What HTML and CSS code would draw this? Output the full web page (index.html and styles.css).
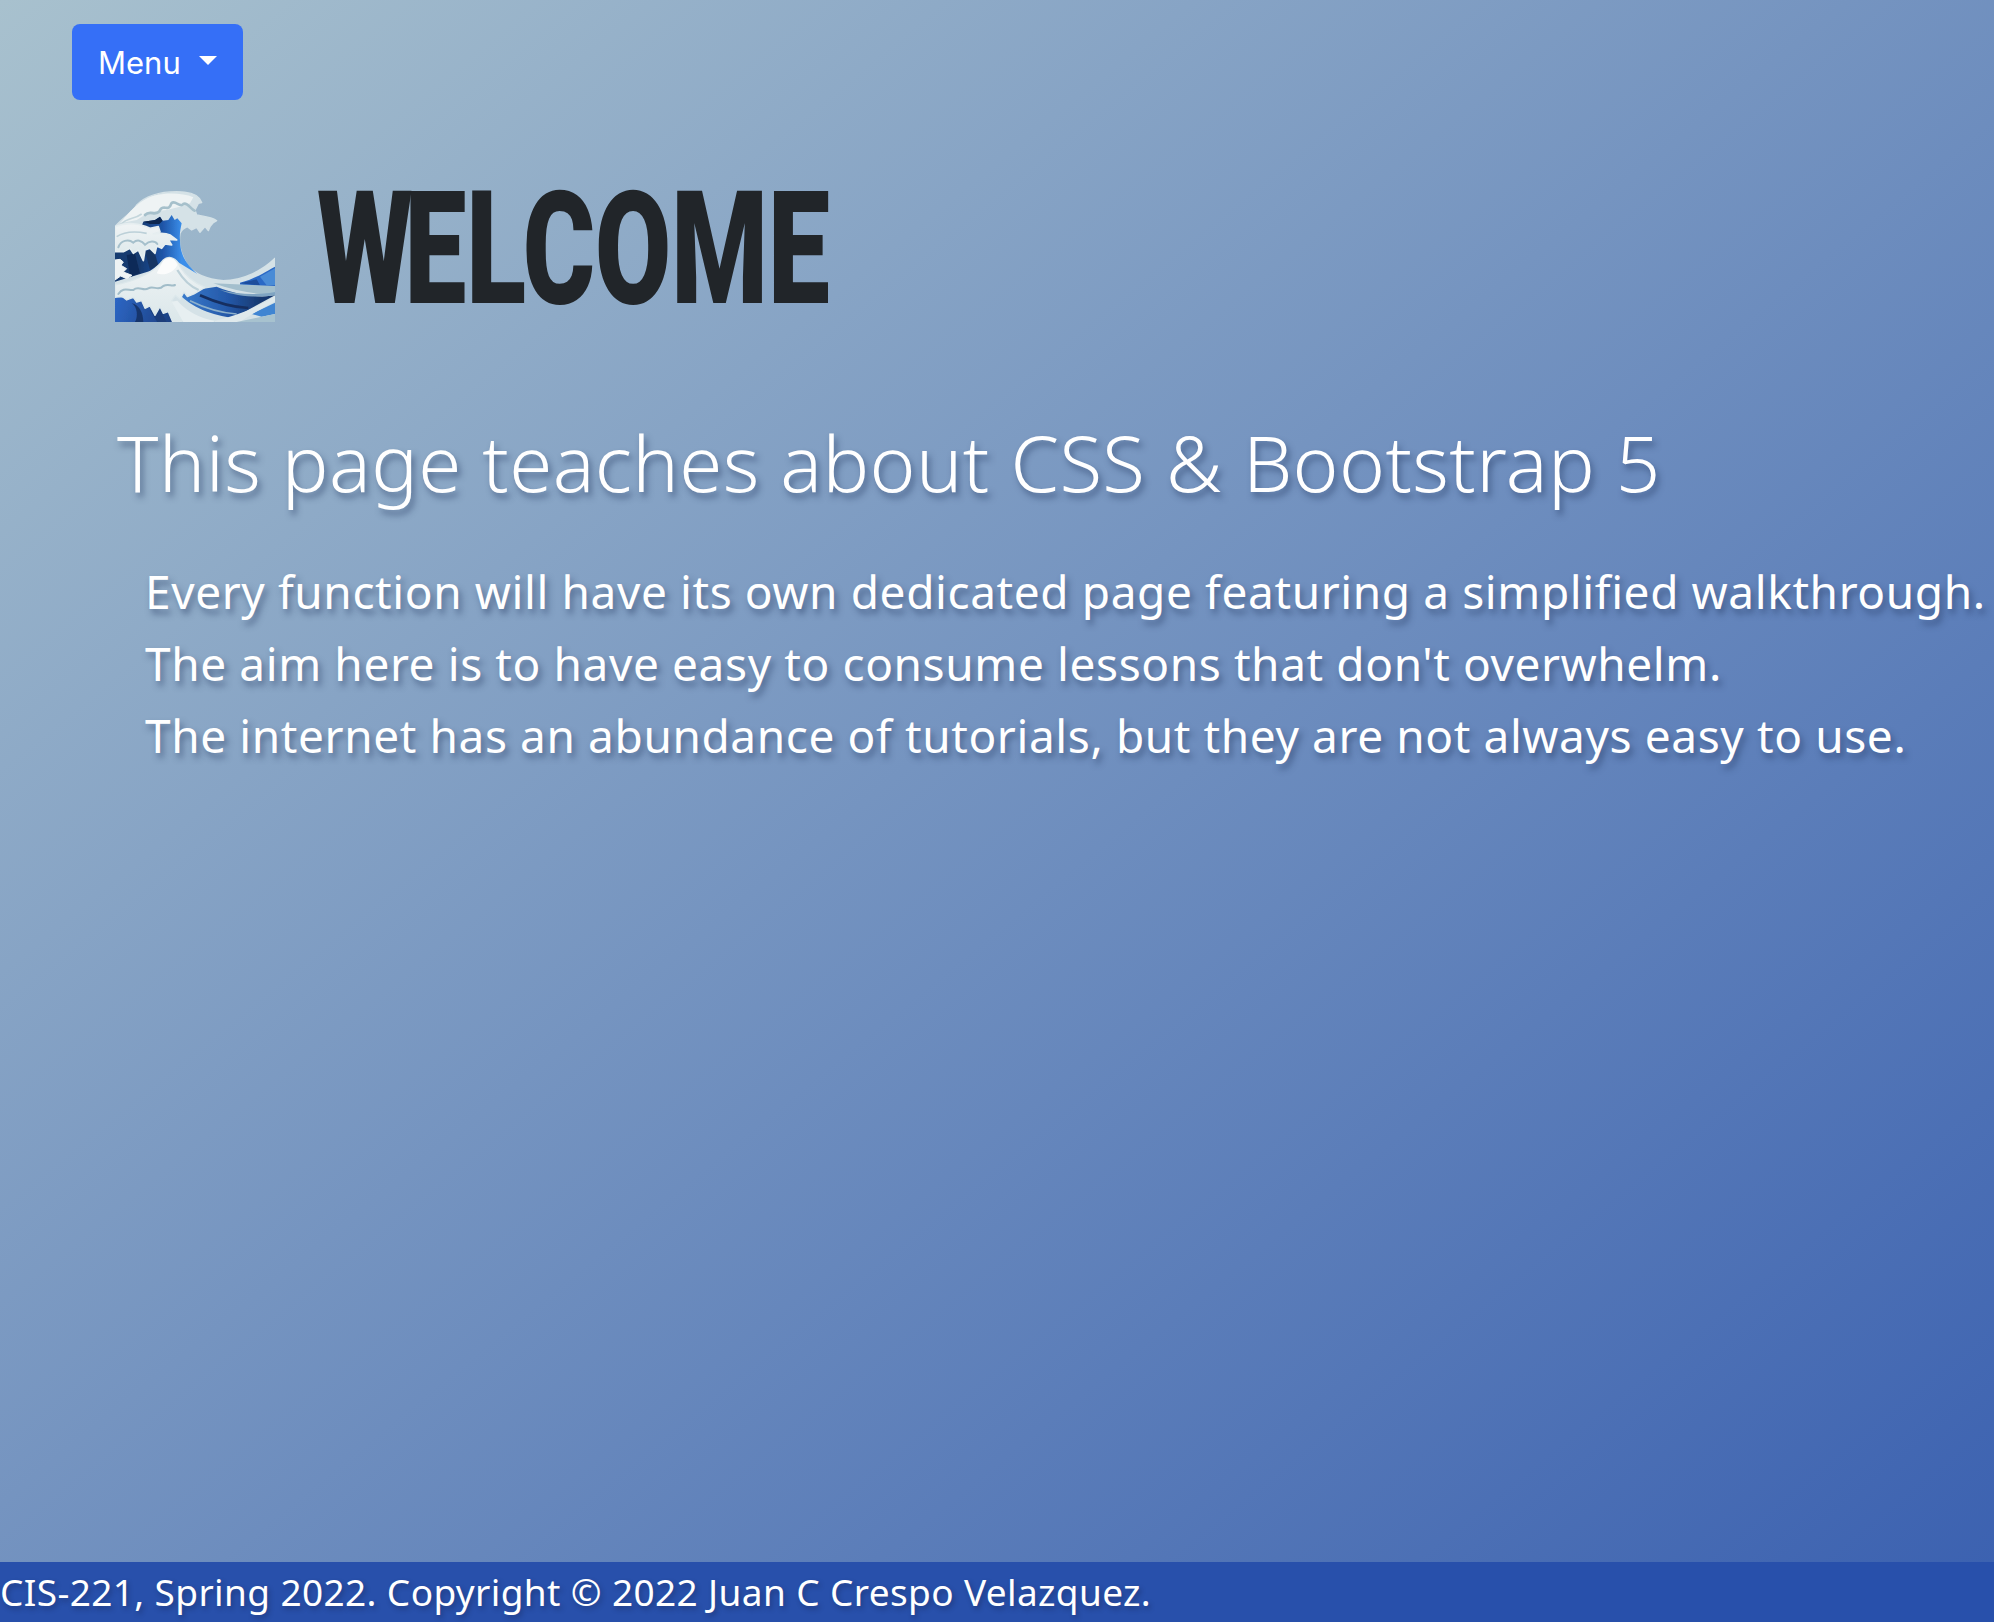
FILE: index.html
```html
<!DOCTYPE html>
<html lang="en">
<head>
  <meta charset="UTF-8" />
  <title>Welcome</title>
  <link rel="stylesheet" href="styles.css">
</head>
<body>
  <div class="menu-row">
    <button class="menu-btn">Menu<span class="caret"></span></button>
  </div>

  <div class="welcome">
    <svg class="wave" viewBox="45 60 480 396" role="img" aria-label="wave">
      <defs>
        <linearGradient id="barrel" gradientUnits="userSpaceOnUse" x1="120" y1="200" x2="245" y2="200">
          <stop offset="0" stop-color="#163a70"/>
          <stop offset="0.55" stop-color="#1f55a8"/>
          <stop offset="1" stop-color="#3a8eea"/>
        </linearGradient>
        <linearGradient id="lowleft" gradientUnits="userSpaceOnUse" x1="45" y1="390" x2="220" y2="450">
          <stop offset="0" stop-color="#2d66c4"/>
          <stop offset="1" stop-color="#1c3f80"/>
        </linearGradient>
        <linearGradient id="strip" gradientUnits="userSpaceOnUse" x1="240" y1="390" x2="480" y2="390">
          <stop offset="0" stop-color="#3a7ccd"/>
          <stop offset="0.6" stop-color="#2458a8"/>
          <stop offset="1" stop-color="#17396f"/>
        </linearGradient>
        <linearGradient id="foam" x1="0" y1="0" x2="0" y2="1">
          <stop offset="0" stop-color="#f0f4f5"/>
          <stop offset="1" stop-color="#dbe7ea"/>
        </linearGradient>
        <filter id="soft" x="-5%" y="-5%" width="110%" height="110%"><feGaussianBlur stdDeviation="1.4"/></filter>
        <clipPath id="box"><rect x="45" y="60" width="480" height="396"/></clipPath>
      </defs>
      <g clip-path="url(#box)">
        <g filter="url(#soft)">
          <!-- whole silhouette -->
          <path fill="#d5e2e7" stroke="#d5e2e7" stroke-width="4" stroke-linejoin="round" d="M45 170C70 140 95 130 110 105C140 75 190 65 230 65C260 65 285 70 298 85L305 98L295 100L285 120L290 135C310 140 335 140 350 152L340 158L330 170L325 182L315 170L300 187L290 172L275 180L262 170C250 175 245 180 240 190C235 220 240 250 262 285C285 315 320 328 370 332C430 332 490 300 525 265V456H45Z"/>
          <path fill="#eef3f4" d="M60 160C85 130 120 85 170 75C200 68 250 68 280 82L270 100L240 110L200 120L150 125L110 150Z"/>
          <!-- shading arcs in the top crest -->
          <path fill="none" stroke="#a6c0cb" stroke-width="8" stroke-linecap="round" d="M135 135C150 118 165 140 178 124C190 98 205 130 214 100C226 88 240 115 250 102C262 95 272 118 284 122"/>
          <path fill="none" stroke="#c4d6dc" stroke-width="5" d="M60 165C85 140 100 150 125 132"/>
          <!-- barrel under the crest -->
          <path fill="url(#barrel)" d="M130 155L165 150L180 140L188 152L205 150L215 135L224 150L232 145L245 160C242 175 238 190 240 210C240 250 255 280 292 312L210 262L160 300L45 335V240C80 240 110 210 130 155Z"/>
          <path fill="#0c2650" d="M130 155L165 150L180 140L188 152L178 162L150 162Z"/>
          <path fill="#102c58" d="M80 255L90 320L120 310L105 250Z"/>
          <path fill="#143464" d="M135 245L150 300L175 285L160 235Z"/>
          <!-- first crest -->
          <path fill="url(#foam)" stroke="#e6eef0" stroke-width="5" stroke-linejoin="round" d="M45 170C80 155 120 160 150 175L175 170L180 185L160 192C185 188 200 190 210 195L230 210L205 208L215 225L195 222L185 235L170 228L165 250L150 235L135 240L130 272L115 240L100 250L90 235L70 245L45 245Z"/>
          <path fill="none" stroke="#a6c0cc" stroke-width="6" stroke-linecap="round" d="M55 232C62 212 85 205 100 218C110 208 125 210 135 224C148 212 165 212 172 222"/>
          <path fill="none" stroke="#bcd0d8" stroke-width="5" d="M50 200C80 180 115 185 140 190"/>
          <!-- white splash on the left -->
          <path fill="#eef3f4" stroke="#eef3f4" stroke-width="3" stroke-linejoin="round" d="M45 270L60 268L70 276L63 286L80 296L70 306L96 316L80 326L62 318L45 330Z"/>
          <!-- right hand strips -->
          <path fill="#2c69c6" d="M420 338C470 325 505 300 525 290V352L420 344Z"/>
          <path fill="#1b4d9c" d="M420 340L470 328L480 346Z"/>
          <path fill="#4a8bd6" d="M480 320L525 295V345L500 346Z"/>
          <path fill="#a3bfcd" d="M340 340L525 348V378C470 372 400 362 340 340Z"/>
          <path fill="url(#strip)" d="M235 368L350 350C420 378 480 384 525 376L440 422L400 444C340 436 270 412 235 368Z"/>
          <path fill="#7fa4c2" d="M360 360C420 374 470 376 525 366V376C470 384 410 380 360 360Z"/>
          <path fill="none" stroke="#8db0cb" stroke-width="5" d="M270 392C310 412 360 428 410 432"/>
          <path fill="none" stroke="#142f60" stroke-width="8" d="M300 376C340 394 390 412 445 414"/>
          <path fill="#3f85d2" d="M455 432L525 398V432L485 440Z"/>
          <path fill="#dfe9ec" d="M345 452C400 440 470 415 525 378V394C480 420 450 434 420 456H345Z"/>
          <path fill="#a7c2cf" d="M410 456L525 432V456Z"/>
          <!-- low blue on the left -->
          <path fill="url(#lowleft)" d="M45 382L100 385L130 395L175 392L205 400L225 456H45Z"/>
          <path fill="#17366c" d="M95 400C112 410 115 440 105 456H130C130 430 118 404 95 400Z"/>
          <path fill="#1a3d7a" d="M150 420L172 456H200L180 416Z"/>
          <!-- front foam peak -->
          <path fill="url(#foam)" stroke="#dde8eb" stroke-width="4" stroke-linejoin="round" d="M45 345C100 335 160 310 190 270C205 256 230 262 240 290C255 315 280 338 315 352L282 372L262 380L252 366L240 388L226 376L215 392C228 412 240 426 262 442L240 456H218L205 425L190 430L180 410L165 436L150 408L135 415L125 392L110 396L100 382L80 390L65 378L45 382Z"/>
          <path fill="#fbfcfc" d="M190 272C205 258 225 262 232 285C220 310 190 318 170 310Z"/>
          <path fill="none" stroke="#a2bdc9" stroke-width="6" stroke-linecap="round" d="M55 372C70 350 85 362 100 360C115 345 130 365 145 355C160 345 175 365 190 348C205 340 215 350 225 345"/>
          <path fill="none" stroke="#bcd0d8" stroke-width="7" d="M232 300C250 330 272 350 296 360"/>
          <path fill="#e7eff1" d="M215 395L232 392C262 425 300 445 345 452L340 456H250Z"/>
        </g>
      </g>
    </svg>
    <h1 class="welcome-title"><span class="tight">W</span>ELCOME</h1>
  </div>

  <main class="intro">
    <h2 class="intro-title">This page teaches about CSS &amp; Bootstrap 5</h2>
    <p>Every function will have its own dedicated page featuring a simplified walkthrough.</p>
    <p>The aim here is to have easy to consume lessons that don't overwhelm.</p>
    <p>The internet has an abundance of tutorials, but they are not always easy to use.</p>
  </main>

  <footer class="site-footer">CIS-221, Spring 2022. Copyright © 2022 Juan C Crespo Velazquez.</footer>
</body>
</html>
```

FILE: styles.css
```css
html, body {
  margin: 0;
  padding: 0;
  height: 100%;
}

body {
  display: flex;
  flex-direction: column;
  min-height: 100vh;
  overflow: hidden;
  box-sizing: border-box;
  font-family: "Noto Sans", sans-serif;
  color: #fff;
  background: linear-gradient(to bottom right, #a8c1ce 0%, #3a60b0 100%);
}

.menu-row {
  padding: 24px 72px 0;
}

.menu-btn {
  display: flex;
  align-items: center;
  height: 76px;
  width: 171px;
  padding: 0 0 0 26px;
  box-sizing: border-box;
  border: 0;
  border-radius: 8px;
  background: #356ff7;
  color: #fff;
  font-family: Inter, sans-serif;
  font-size: 31px;
}

.caret {
  width: 0;
  height: 0;
  margin: -4px 0 0 18px;
  border-top: 9px solid #fff;
  border-left: 9px solid transparent;
  border-right: 9px solid transparent;
}

.welcome {
  display: flex;
  align-items: flex-start;
  padding: 90px 0 0 115px;
}

.wave {
  width: 160px;
  height: 132px;
  flex: none;
}

.welcome-title {
  margin: 2px 0 0 42px;
  color: #212529;
  font-family: Roboto, sans-serif;
  font-weight: 900;
  font-size: 157px;
  line-height: 114px;
  transform: scaleX(0.703);
  transform-origin: left top;
  white-space: nowrap;
}

.tight {
  letter-spacing: -12px;
}

.intro {
  padding: 92px 0 0 117px;
  text-shadow: 3px 5px 6px rgba(30, 50, 90, 0.5);
}

.intro-title {
  margin: 0 0 45px;
  font-size: 78px;
  font-weight: 300;
  line-height: 96px;
  letter-spacing: 0.38px;
  white-space: nowrap;
}

.intro p {
  margin: 0 0 0 28px;
  font-size: 46px;
  line-height: 72px;
  letter-spacing: 0.6px;
  white-space: nowrap;
}

.site-footer {
  margin-top: auto;
  height: 60px;
  background: #2850ab;
  font-size: 37px;
  line-height: 60px;
  letter-spacing: 0.38px;
  white-space: nowrap;
  text-shadow: 2px 3px 5px rgba(20, 30, 70, 0.4);
}
```
